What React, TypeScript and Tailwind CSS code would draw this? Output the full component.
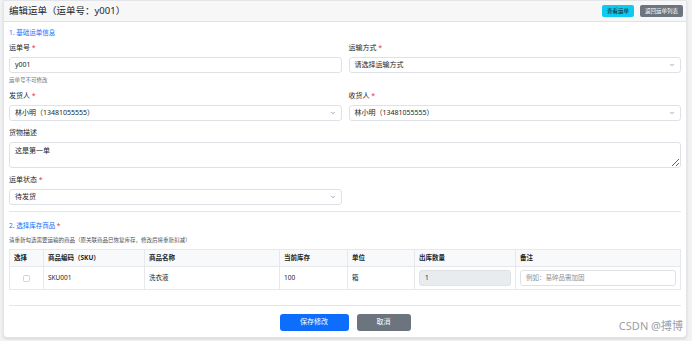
import { ChevronDown } from 'lucide-react';
import type { ReactNode } from 'react';

function Label({ children, required }: { children: ReactNode; required?: boolean }) {
  return (
    <div className="text-[7px] leading-[10px] text-[#212529] mb-[4px]">
      {children}
      {required && <span className="text-[#dc3545]"> *</span>}
    </div>
  );
}

function Select({ value }: { value: string }) {
  return (
    <div className="h-[16px] border border-[#dee2e6] rounded-[3px] bg-white flex items-center justify-between pl-[5px] pr-[5px] text-[7px] text-[#212529]">
      <span>{value}</span>
      <ChevronDown className="w-[6px] h-[6px] text-[#6c757d]" strokeWidth={2.5} />
    </div>
  );
}

const cols = 'grid grid-cols-[34px_101px_135px_68px_67px_101px_1fr]';

export default function App() {
  return (
    <div className="min-h-[341px] bg-[#f1f2f4] pl-[3px] pr-[5px] font-['Noto_Sans','Noto_Sans_CJK_SC',sans-serif] text-[#212529]">
      <div className="relative bg-white border border-[#e3e5e8] rounded-b-[4px] shadow-sm h-[338px] flex flex-col">
        {/* Header */}
        <div className="h-[21px] bg-[#f7f7f8] border-b border-[#dee2e6] flex items-center justify-between pl-[5px] pr-[3px]">
          <h1 className="text-[9.5px] text-[#212529]">编辑运单（运单号：y001）</h1>
          <div className="flex items-center gap-[6px]">
            <button className="h-[12px] px-[5px] bg-[#0dcaf0] text-[#111] text-[5.5px] rounded-[2px]">查看运单</button>
            <button className="h-[12px] px-[5px] bg-[#6c757d] text-white text-[5.5px] rounded-[2px]">返回运单列表</button>
          </div>
        </div>

        {/* Body */}
        <div className="px-[5px] pt-[6px] flex flex-col">
          <div className="text-[6.5px] leading-[10px] text-[#0d6efd] mb-[5px]">1. 基础运单信息</div>

          <div className="grid grid-cols-2 gap-x-[7px] gap-y-[7px]">
            <div>
              <Label required>运单号</Label>
              <div className="h-[16px] border border-[#dee2e6] rounded-[3px] flex items-center px-[5px] text-[7px]">y001</div>
              <div className="text-[5.5px] leading-[8px] text-[#6c757d] mt-[3px]">运单号不可修改</div>
            </div>
            <div>
              <Label required>运输方式</Label>
              <Select value="请选择运输方式" />
            </div>
            <div>
              <Label required>发货人</Label>
              <Select value="林小明（13481055555）" />
            </div>
            <div>
              <Label required>收货人</Label>
              <Select value="林小明（13481055555）" />
            </div>
            <div className="col-span-2">
              <Label>货物描述</Label>
              <textarea
                readOnly
                defaultValue="这是第一单"
                className="block w-full h-[26px] border border-[#dee2e6] rounded-[3px] px-[5px] py-[3px] text-[7px] leading-[10px] outline-none"
              />
            </div>
            <div>
              <Label required>运单状态</Label>
              <Select value="待发货" />
            </div>
          </div>

          <div className="border-t border-[#e3e5e8] mt-[6px] mb-[9px]" />

          <div className="text-[6.5px] leading-[10px] text-[#0d6efd] mb-[5px]">
            2. 选择库存商品<span className="text-[#dc3545]"> *</span>
          </div>
          <div className="text-[5.5px] leading-[8px] text-[#495057] mb-[5px]">
            请重新勾选需要运输的商品（原关联商品已恢复库存，修改后将重新扣减）
          </div>

          {/* Table */}
          <div className="border border-[#e6e8eb] text-[6.5px]">
            <div className={`${cols} h-[17px] bg-[#f8f9fa] font-bold border-b border-[#e6e8eb]`}>
              {['选择', '商品编码（SKU）', '商品名称', '当前库存', '单位', '出库数量', '备注'].map((h, i) => (
                <div key={h} className={`flex items-center px-[4px] ${i < 6 ? 'border-r border-[#e6e8eb]' : ''}`}>{h}</div>
              ))}
            </div>
            <div className={`${cols} h-[22px]`}>
              <div className="flex items-center justify-center border-r border-[#e6e8eb]">
                <span className="w-[7px] h-[7px] border border-[#ced4da] rounded-[1.5px] bg-white" />
              </div>
              <div className="flex items-center px-[4px] border-r border-[#e6e8eb]">SKU001</div>
              <div className="flex items-center px-[4px] border-r border-[#e6e8eb]">洗衣液</div>
              <div className="flex items-center px-[4px] border-r border-[#e6e8eb]">100</div>
              <div className="flex items-center px-[4px] border-r border-[#e6e8eb]">箱</div>
              <div className="flex items-center px-[4px] border-r border-[#e6e8eb]">
                <div className="w-full h-[16px] bg-[#e9ecef] border border-[#dee2e6] rounded-[3px] flex items-center px-[5px] text-[6.5px]">1</div>
              </div>
              <div className="flex items-center px-[4px]">
                <div className="w-full h-[16px] bg-white border border-[#dee2e6] rounded-[3px] flex items-center px-[5px] text-[6.5px] text-[#8a9096]">例如：易碎品需加固</div>
              </div>
            </div>
          </div>

          <div className="border-t border-[#e3e5e8] mt-[15px]" />

          <div className="flex justify-center gap-[8px] mt-[8px]">
            <button className="w-[69px] h-[17px] bg-[#0d6efd] text-white text-[7px] rounded-[3px]">保存修改</button>
            <button className="w-[54px] h-[17px] bg-[#6c757d] text-white text-[7px] rounded-[3px]">取消</button>
          </div>
        </div>

        <div className="absolute right-[3px] bottom-[3px] text-[11px] text-[#9aa0a6]">CSDN @搏博</div>
      </div>
    </div>
  );
}
